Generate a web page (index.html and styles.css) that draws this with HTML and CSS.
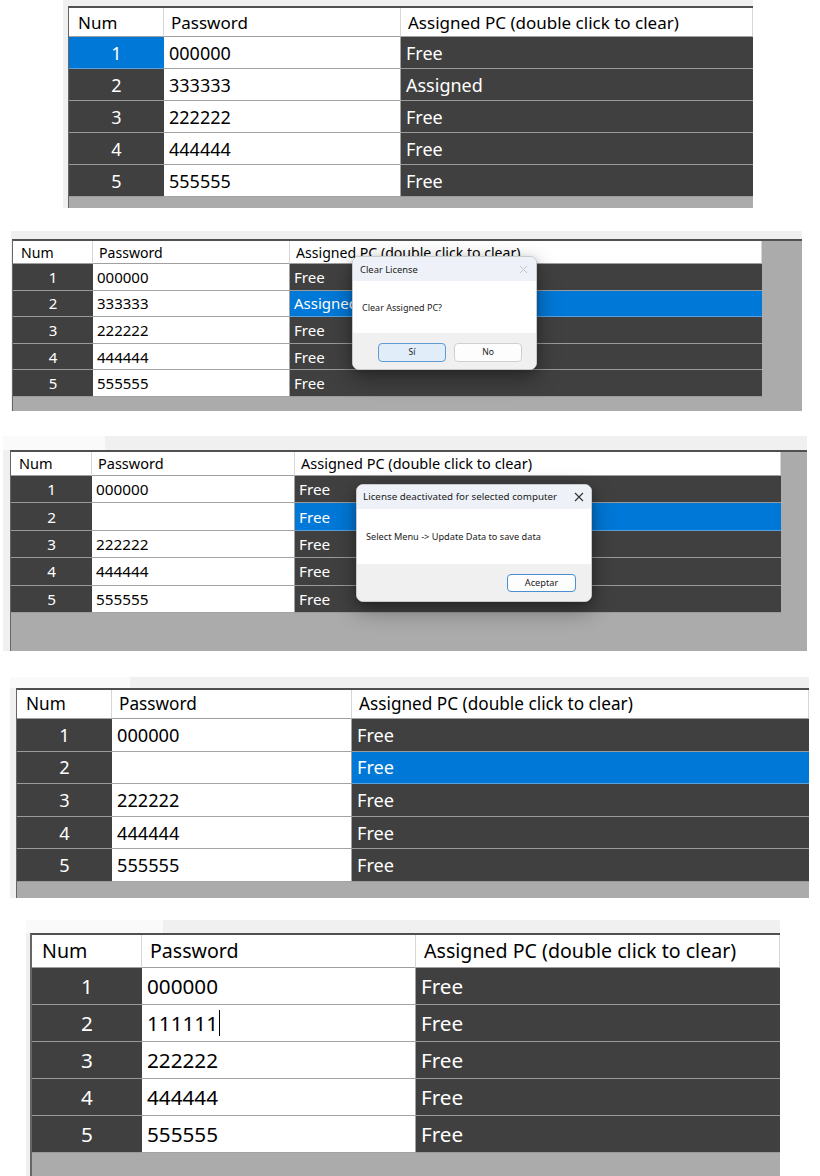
FILE: index.html
```html
<!DOCTYPE html>
<html lang="en">
<head>
<meta charset="utf-8">
<title>License table</title>
<link rel="stylesheet" href="styles.css">
</head>
<body>

<!-- Step 1: table with one assigned PC -->
<section class="shot shot-1">
  <div class="frame">
    <div class="strip"></div>
    <div class="body">
      <div class="grid">
        <div class="row head">
          <div class="c num">Num</div>
          <div class="c pw">Password</div>
          <div class="c pc">Assigned PC (double click to clear)</div>
        </div>
        <div class="row"><div class="c num sel">1</div><div class="c pw">000000</div><div class="c pc">Free</div></div>
        <div class="row"><div class="c num">2</div><div class="c pw">333333</div><div class="c pc">Assigned</div></div>
        <div class="row"><div class="c num">3</div><div class="c pw">222222</div><div class="c pc">Free</div></div>
        <div class="row"><div class="c num">4</div><div class="c pw">444444</div><div class="c pc">Free</div></div>
        <div class="row"><div class="c num">5</div><div class="c pw">555555</div><div class="c pc">Free</div></div>
        <div class="tail"></div>
      </div>
    </div>
  </div>
</section>

<!-- Step 2: confirmation prompt -->
<section class="shot shot-2">
  <div class="frame">
    <div class="strip"></div>
    <div class="body">
      <div class="grid">
        <div class="row head">
          <div class="c num">Num</div>
          <div class="c pw">Password</div>
          <div class="c pc">Assigned PC (double click to clear)</div>
        </div>
        <div class="row"><div class="c num">1</div><div class="c pw">000000</div><div class="c pc">Free</div></div>
        <div class="row"><div class="c num">2</div><div class="c pw">333333</div><div class="c pc sel">Assigned</div></div>
        <div class="row"><div class="c num">3</div><div class="c pw">222222</div><div class="c pc">Free</div></div>
        <div class="row"><div class="c num">4</div><div class="c pw">444444</div><div class="c pc">Free</div></div>
        <div class="row"><div class="c num">5</div><div class="c pw">555555</div><div class="c pc">Free</div></div>
        <div class="tail"></div>
      </div>
    </div>
  </div>
  <div class="dialog dlg-confirm">
    <div class="dlg-title">
      <span>Clear License</span>
      <svg class="x muted" viewBox="0 0 10 10" width="9" height="9"><path d="M1 1L9 9M9 1L1 9"/></svg>
    </div>
    <div class="dlg-body">Clear Assigned PC?</div>
    <div class="dlg-foot">
      <button class="btn primary">Sí</button>
      <button class="btn">No</button>
    </div>
  </div>
</section>

<!-- Step 3: deactivation notice -->
<section class="shot shot-3">
  <div class="frame">
    <div class="strip"><div class="tab"></div></div>
    <div class="body">
      <div class="grid">
        <div class="row head">
          <div class="c num">Num</div>
          <div class="c pw">Password</div>
          <div class="c pc">Assigned PC (double click to clear)</div>
        </div>
        <div class="row"><div class="c num">1</div><div class="c pw">000000</div><div class="c pc">Free</div></div>
        <div class="row"><div class="c num">2</div><div class="c pw"></div><div class="c pc sel">Free</div></div>
        <div class="row"><div class="c num">3</div><div class="c pw">222222</div><div class="c pc">Free</div></div>
        <div class="row"><div class="c num">4</div><div class="c pw">444444</div><div class="c pc">Free</div></div>
        <div class="row"><div class="c num">5</div><div class="c pw">555555</div><div class="c pc">Free</div></div>
        <div class="tail"></div>
      </div>
    </div>
  </div>
  <div class="dialog dlg-notice">
    <div class="dlg-title">
      <span>License deactivated for selected computer</span>
      <svg class="x" viewBox="0 0 10 10" width="10" height="10"><path d="M1 1L9 9M9 1L1 9"/></svg>
    </div>
    <div class="dlg-body">Select Menu -&gt; Update Data to save data</div>
    <div class="dlg-foot">
      <button class="btn focus">Aceptar</button>
    </div>
  </div>
</section>

<!-- Step 4: cleared row -->
<section class="shot shot-4">
  <div class="frame">
    <div class="strip"><div class="tab"></div></div>
    <div class="body">
      <div class="grid">
        <div class="row head">
          <div class="c num">Num</div>
          <div class="c pw">Password</div>
          <div class="c pc">Assigned PC (double click to clear)</div>
        </div>
        <div class="row"><div class="c num">1</div><div class="c pw">000000</div><div class="c pc">Free</div></div>
        <div class="row"><div class="c num">2</div><div class="c pw"></div><div class="c pc sel">Free</div></div>
        <div class="row"><div class="c num">3</div><div class="c pw">222222</div><div class="c pc">Free</div></div>
        <div class="row"><div class="c num">4</div><div class="c pw">444444</div><div class="c pc">Free</div></div>
        <div class="row"><div class="c num">5</div><div class="c pw">555555</div><div class="c pc">Free</div></div>
        <div class="tail"></div>
      </div>
    </div>
  </div>
</section>

<!-- Step 5: new password being typed -->
<section class="shot shot-5">
  <div class="frame">
    <div class="strip"><div class="tab"></div></div>
    <div class="body">
      <div class="grid">
        <div class="row head">
          <div class="c num">Num</div>
          <div class="c pw">Password</div>
          <div class="c pc">Assigned PC (double click to clear)</div>
        </div>
        <div class="row"><div class="c num">1</div><div class="c pw">000000</div><div class="c pc">Free</div></div>
        <div class="row"><div class="c num">2</div><div class="c pw">111111<span class="caret"></span></div><div class="c pc">Free</div></div>
        <div class="row"><div class="c num">3</div><div class="c pw">222222</div><div class="c pc">Free</div></div>
        <div class="row"><div class="c num">4</div><div class="c pw">444444</div><div class="c pc">Free</div></div>
        <div class="row"><div class="c num">5</div><div class="c pw">555555</div><div class="c pc">Free</div></div>
        <div class="tail"></div>
      </div>
    </div>
  </div>
</section>

</body>
</html>
```

FILE: styles.css
```css
* {
  box-sizing: border-box;
}

html, body {
  margin: 0;
  padding: 0;
  background: #ffffff;
}

body {
  width: 820px;
  height: 1176px;
  overflow: hidden;
  font-family: "Noto Sans", "Open Sans", sans-serif;
}

/* ---------- one captured window ---------- */
.shot {
  position: relative;
}

.frame {
  margin-left: var(--x);
  width: var(--w);
  background: #f0f0f0;
}

.strip {
  height: var(--strip);
  display: flex;
}

.tab {
  width: var(--tab, 0);
  background: #fafafa;
}

.body {
  padding-left: var(--pl);
}

.grid {
  border-top: 2px solid #505050;
  border-left: var(--bl, 1px) solid #666666;
  background: #ababab;
  overflow: hidden;
}

/* ---------- rows and cells ---------- */
.row {
  display: flex;
  height: var(--rh);
}

.row.head {
  height: var(--hh);
}

.c {
  display: flex;
  align-items: center;
  white-space: nowrap;
  overflow: hidden;
  flex: 0 0 auto;
  border-bottom: 1px solid #a3a3a3;
  font-size: var(--fd);
  padding-left: var(--pd);
}

.c.num { width: var(--c1); }
.c.pw  { width: var(--c2); }
.c.pc  { width: var(--c3); }

.row .num {
  justify-content: center;
  padding-left: 0;
  background: #404040;
  color: #ffffff;
  border-bottom-color: #9a9a9a;
}

.row .pw {
  background: #ffffff;
  color: #000000;
  border-right: 1px solid #a3a3a3;
}

.row .pc {
  background: #404040;
  color: #ffffff;
  border-bottom-color: #9a9a9a;
}

.row .sel {
  background: #0078d7;
  border-bottom-color: #5aa0dc;
}

.row.head .c {
  background: #ffffff;
  color: #000000;
  justify-content: flex-start;
  font-size: var(--fh);
  padding-left: var(--ph);
  border-bottom-color: #a0a0a0;
  border-right: 1px solid #d6d6d6;
}

.row.head .num {
  padding-left: var(--phn);
}

.tail {
  height: var(--tail);
}

.caret {
  display: inline-block;
  width: 1px;
  height: 26px;
  margin-left: 1px;
  background: #000000;
}

/* ---------- per-window geometry ---------- */
.shot-1 {
  --x: 63px; --w: 690px; --strip: 6px; --pl: 5px; --bl: 1px;
  --hh: 29px; --rh: 32px; --tail: 11px;
  --c1: 95px; --c2: 237px; --c3: 352px;
  --fh: 17px; --fd: 18px; --ph: 7px; --phn: 9px; --pd: 5px;
}

.shot-2 {
  margin-top: 23px;
  --x: 11px; --w: 791px; --strip: 8px; --pl: 1px; --bl: 1px;
  --hh: 23px; --rh: 26.6px; --tail: 14px;
  --c1: 80px; --c2: 197px; --c3: 472px;
  --fh: 14.1px; --fd: 15px; --ph: 6px; --phn: 8px; --pd: 4px;
}

.shot-3 {
  margin-top: 25px;
  --x: 3px; --w: 804px; --strip: 14px; --pl: 7px; --bl: 1px; --tab: 102px;
  --hh: 24px; --rh: 27.4px; --tail: 38px;
  --c1: 81px; --c2: 203px; --c3: 486px;
  --fh: 14.5px; --fd: 15.3px; --ph: 6px; --phn: 8px; --pd: 4px;
}

.shot-4 {
  margin-top: 26px;
  --x: 10px; --w: 799px; --strip: 11px; --pl: 6px; --bl: 1px; --tab: 120px;
  --hh: 29px; --rh: 32.6px; --tail: 16px;
  --c1: 95px; --c2: 240px; --c3: 457px;
  --fh: 17.2px; --fd: 18.2px; --ph: 7px; --phn: 9px; --pd: 5px;
}

.shot-5 {
  margin-top: 22px;
  --x: 26px; --w: 754px; --strip: 13px; --pl: 4px; --bl: 2px; --tab: 137px;
  --hh: 33px; --rh: 37px; --tail: 30px;
  --c1: 110px; --c2: 274px; --c3: 364px;
  --fh: 19.6px; --fd: 20.7px; --ph: 8px; --phn: 10px; --pd: 5px;
}

/* ---------- message boxes ---------- */
.dialog {
  position: absolute;
  display: flex;
  flex-direction: column;
  background: #ffffff;
  border: 1px solid #c9c9c9;
  border-radius: 7px;
  overflow: hidden;
  box-shadow: 0 8px 22px rgba(0, 0, 0, 0.38), 0 2px 6px rgba(0, 0, 0, 0.15);
  color: #1b1b1b;
}

.dlg-title {
  display: flex;
  align-items: center;
  justify-content: space-between;
  background: #eef2f8;
}

.dlg-body {
  display: flex;
  align-items: center;
  background: #ffffff;
}

.dlg-foot {
  display: flex;
  justify-content: flex-end;
  align-items: flex-start;
  background: #f0f0f0;
}

.x path {
  fill: none;
  stroke: #333333;
  stroke-width: 1.1;
}

.x.muted path {
  stroke: #c4c4c4;
}

.btn {
  font-family: inherit;
  color: #1b1b1b;
  background: #fdfdfd;
  border: 1px solid #d0d0d0;
  border-radius: 4px;
  padding: 0;
  margin: 0;
  line-height: 1;
}

.btn.primary {
  background: #e1edf8;
  border-color: #5f9ad4;
}

.btn.focus {
  background: #fdfdfd;
  border-color: #4a8fd2;
}

/* clear-license prompt */
.dlg-confirm {
  left: 352px;
  top: 25px;
  width: 185px;
  height: 114px;
}

.dlg-confirm .dlg-title {
  height: 24px;
  padding: 0 8px 0 7px;
  font-size: 9.4px;
}

.dlg-confirm .dlg-body {
  height: 52px;
  padding-left: 9px;
  font-size: 9px;
}

.dlg-confirm .dlg-foot {
  flex: 1;
  padding: 10px 14px 0 0;
  gap: 8px;
}

.dlg-confirm .btn {
  width: 68px;
  height: 19px;
  font-size: 8.6px;
}

/* deactivation notice */
.dlg-notice {
  left: 356px;
  top: 48px;
  width: 236px;
  height: 118px;
}

.dlg-notice .dlg-title {
  height: 24px;
  padding: 0 7px 0 6px;
  font-size: 9.8px;
}

.dlg-notice .dlg-body {
  height: 55px;
  padding-left: 9px;
  font-size: 9.2px;
}

.dlg-notice .dlg-foot {
  flex: 1;
  padding: 10px 15px 0 0;
}

.dlg-notice .btn {
  width: 69px;
  height: 18px;
  font-size: 9.2px;
}
```
